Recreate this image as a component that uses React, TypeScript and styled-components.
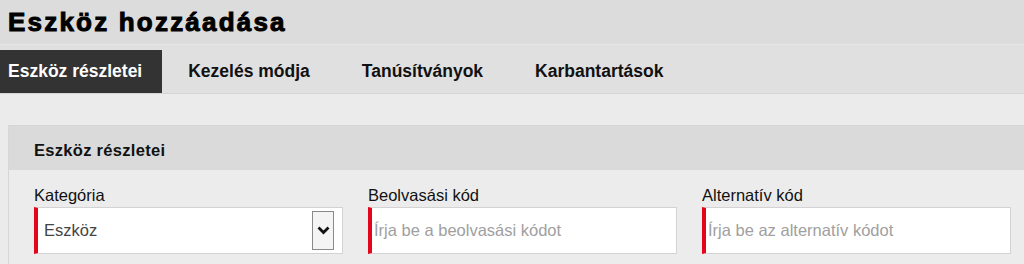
import styled, { createGlobalStyle } from 'styled-components';

const GlobalStyle = createGlobalStyle`
  body {
    margin: 0;
    background: #ebebeb;
    font-family: "Liberation Sans", Arial, sans-serif;
    color: #111;
    overflow: hidden;
  }
`;

const PageHeader = styled.header`
  height: 44px;
  padding-left: 8px;
  background: #dcdcdc;
  border-bottom: 1px solid #e6e6e6;
`;

const Title = styled.h1`
  margin: 0;
  font-size: 26px;
  line-height: 44px;
  font-weight: 700;
  letter-spacing: 2.2px;
  -webkit-text-stroke: 1px #000;
  color: #000;
`;

const TabBar = styled.nav`
  display: flex;
  align-items: flex-end;
  height: 48px;
  background: #e0e0e0;
  border-bottom: 1px solid #d4d4d4;
`;

const Tab = styled.div<{ $active?: boolean }>`
  height: 43px;
  padding: 0 26px;
  font-size: 17.5px;
  font-weight: 700;
  line-height: 43px;
  white-space: nowrap;
  color: ${(p) => (p.$active ? '#fff' : '#111')};
  background: ${(p) => (p.$active ? '#333' : 'transparent')};

  &:first-child {
    padding: 0 20px 0 8px;
  }
`;

const Content = styled.main`
  padding: 31px 0 0 8px;
`;

const Card = styled.section`
  width: 1029px;
  border: 1px solid #d6d6d6;
  background: #ececec;
`;

const CardHeader = styled.h2`
  margin: 0;
  height: 39px;
  padding: 5px 25px 0;
  font-size: 16.5px;
  letter-spacing: 0.3px;
  line-height: 39px;
  font-weight: 700;
  background: #dadada;
`;

const CardBody = styled.div`
  display: grid;
  grid-template-columns: repeat(3, 309px);
  gap: 25px;
  padding: 16px 25px 20px;
`;

const Field = styled.div`
  display: flex;
  flex-direction: column;
  gap: 3px;
`;

const Label = styled.label`
  font-size: 16.5px;
  line-height: 18px;
  color: #111;
`;

const Box = styled.div`
  display: flex;
  align-items: center;
  height: 45px;
  background: #fff;
  border: 1px solid #d3d3d3;
  border-left: 4px solid #e3051b;
`;

const SelectValue = styled.span`
  flex: 1;
  padding-left: 6px;
  font-size: 16.5px;
  color: #444;
`;

const ArrowButton = styled.span`
  display: flex;
  align-items: center;
  justify-content: center;
  width: 20px;
  height: 37px;
  margin-right: 8px;
  background: #f4f4f4;
  border: 1px solid #8a8a8a;
`;

const TextInput = styled.input`
  flex: 1;
  min-width: 0;
  height: 100%;
  padding: 0 0 0 2px;
  border: none;
  outline: none;
  background: transparent;
  font-family: inherit;
  font-size: 16.5px;
  color: #444;

  &::placeholder {
    color: #a0a0a0;
  }
`;

const Chevron = () => (
  <svg width="13" height="9" viewBox="0 0 13 9">
    <polyline points="1.5,1.5 6.5,6.5 11.5,1.5" fill="none" stroke="#111" strokeWidth="2.8" />
  </svg>
);

const tabs = ['Eszköz részletei', 'Kezelés módja', 'Tanúsítványok', 'Karbantartások'];

const App = () => (
  <>
    <GlobalStyle />
    <PageHeader>
      <Title>Eszköz hozzáadása</Title>
    </PageHeader>
    <TabBar>
      {tabs.map((t, i) => (
        <Tab key={t} $active={i === 0}>{t}</Tab>
      ))}
    </TabBar>
    <Content>
      <Card>
        <CardHeader>Eszköz részletei</CardHeader>
        <CardBody>
          <Field>
            <Label>Kategória</Label>
            <Box>
              <SelectValue>Eszköz</SelectValue>
              <ArrowButton><Chevron /></ArrowButton>
            </Box>
          </Field>
          <Field>
            <Label>Beolvasási kód</Label>
            <Box>
              <TextInput placeholder="Írja be a beolvasási kódot" />
            </Box>
          </Field>
          <Field>
            <Label>Alternatív kód</Label>
            <Box>
              <TextInput placeholder="Írja be az alternatív kódot" />
            </Box>
          </Field>
        </CardBody>
      </Card>
    </Content>
  </>
);

export default App;
